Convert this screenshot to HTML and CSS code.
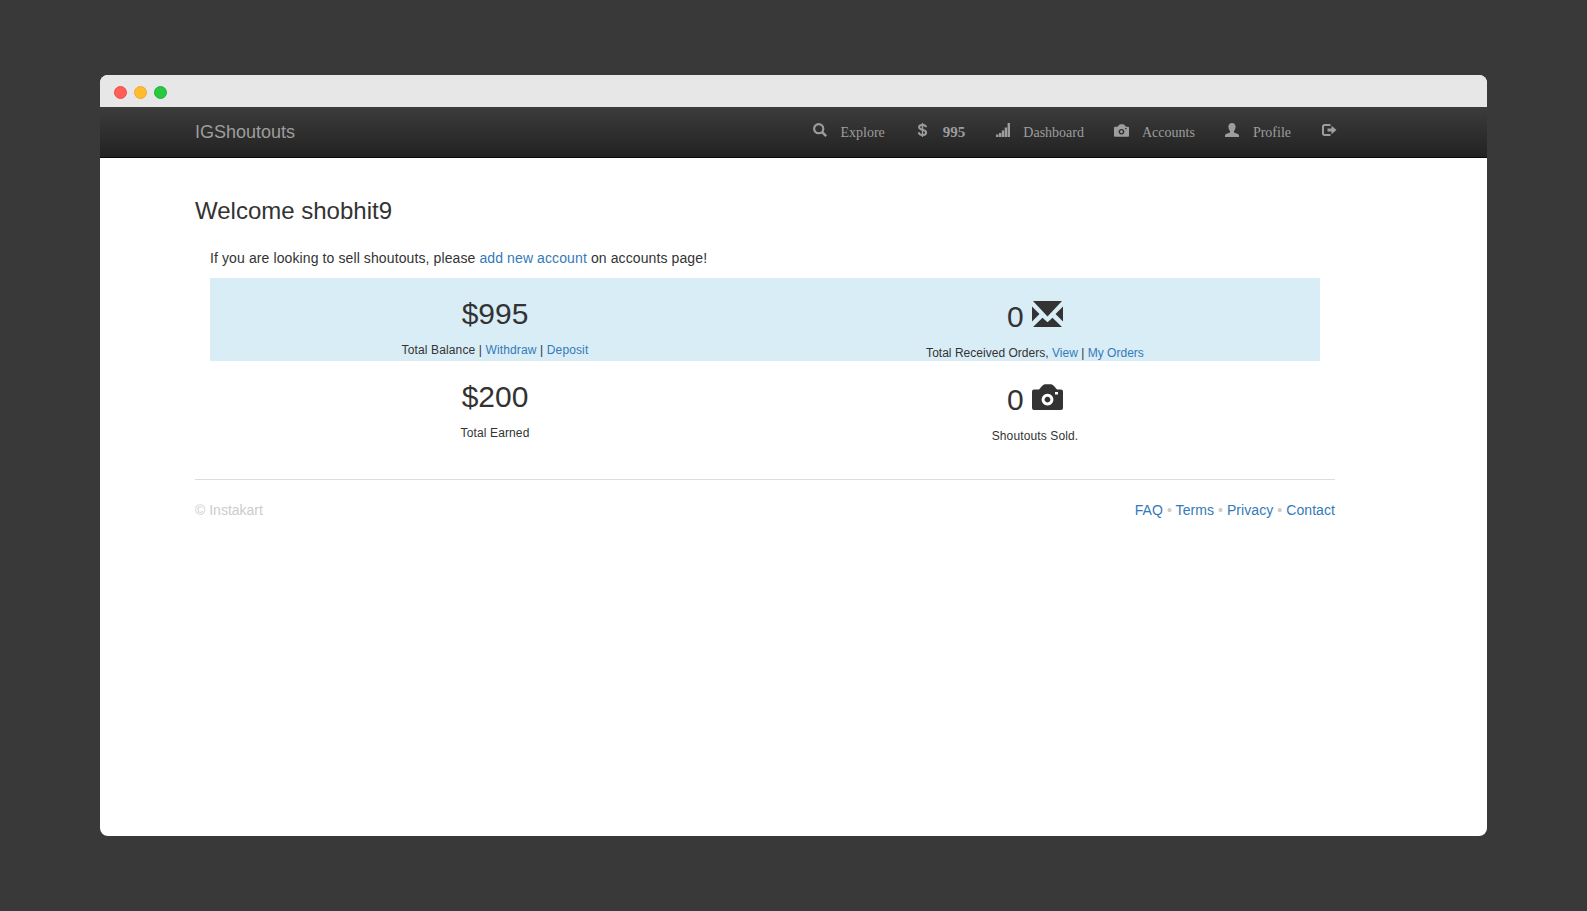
FILE: index.html
```html
<!DOCTYPE html>
<html lang="en">
<head>
<meta charset="utf-8">
<title>IGShoutouts</title>
<link rel="stylesheet" href="styles.css">
</head>
<body>
<div class="window">
  <div class="titlebar"><span class="dot red"></span><span class="dot yellow"></span><span class="dot green"></span></div>
  <header class="navbar">
    <div class="brand">IGShoutouts</div>
    <nav class="nav">
      <a class="item"><svg class="icon" viewBox="0 0 14 14"><circle cx="5.7" cy="5.7" r="4.6" fill="none" stroke="currentColor" stroke-width="2.100"/><path d="M8.200 10l1.800-1.800 4 4-1.700 1.700z"/></svg>Explore</a>
      <a class="item balance"><svg class="icon" viewBox="0 0 14 14"><path d="M7.500 0v14" stroke="currentColor" stroke-width="1.400"/><path d="M11 4.200C10.900 2.700 9.500 1.900 7.500 1.900C5.300 1.900 4.100 2.900 4.100 4.200C4.100 7.500 11.100 6.100 11.100 9.600C11.100 11.100 9.800 12.100 7.600 12.100C5.200 12.100 3.900 11 3.800 9.300" fill="none" stroke="currentColor" stroke-width="2"/></svg><b>995</b></a>
      <a class="item"><svg class="icon bars" viewBox="0 0 14 14"><path d="M0 11.500h2.400V14H0zM2.900 10h2.400v4H2.900zM5.800 7.500h2.400V14H5.800zM8.700 4.500h2.400V14H8.700zM11.600 0H14v14h-2.400z"/></svg>Dashboard</a>
      <a class="item"><svg class="icon camera" viewBox="0 0 31 26"><path fill-rule="evenodd" d="M2 5.500h5L10 2Q11.500.3 13 .3h6Q20.500.3 22 2l3 3.500h4q2 0 2 2V24q0 2-2 2H2q-2 0-2-2V7.500q0-2 2-2zM15.500 9.700a5.900 5.900 0 1 0 .01 0zM15.500 12.700a2.900 2.900 0 1 1-.01 0zM23 8v2.600h3V8z"/></svg>Accounts</a>
      <a class="item"><svg class="icon" viewBox="0 0 14 14"><path d="M7 0c2.200 0 3.600 1.400 3.600 3.700 0 2-.8 3.200-1.600 4.200v1.500l4 1.700q1 .5 1 1.500V14H0v-1.400q0-1 1-1.500l4-1.700V7.900C4.200 6.900 3.400 5.700 3.400 3.700 3.400 1.400 4.800 0 7 0z"/></svg>Profile</a>
      <a class="item"><svg class="icon logout" viewBox="0 0 16 14"><path d="M9.500 2H3.700Q2 2 2 3.700v6.600Q2 12 3.700 12h5.800" fill="none" stroke="currentColor" stroke-width="2"/><path d="M6.500 5.500h4V2.800L15.500 7l-5 4.200V8.500h-4z"/></svg></a>
    </nav>
  </header>
  <main class="container">
    <h1>Welcome shobhit9</h1>
    <div class="content">
      <p class="intro">If you are looking to sell shoutouts, please <a>add new account</a> on accounts page!</p>
      <section class="stats highlighted">
        <div class="stat"><h2>$995</h2><small>Total Balance | <a>Withdraw</a> | <a>Deposit</a></small></div>
        <div class="stat with-icon"><h2>0 <svg class="big" viewBox="0 0 31 26"><path d="M1 0h29L15.500 15.500zM0 5.500L7.500 13 0 20.500zM31 5.500L23.500 13l7.500 7.500zM1 26l9.500-9.200 5 4.400 5-4.400L30 26z"/></svg></h2><small class="orders">Total Received Orders, <a>View</a> | <a>My Orders</a></small></div>
      </section>
      <section class="stats">
        <div class="stat"><h2>$200</h2><small>Total Earned</small></div>
        <div class="stat with-icon"><h2>0 <svg class="big" viewBox="0 0 31 26"><path fill-rule="evenodd" d="M2 5.500h5L10 2Q11.500.3 13 .3h6Q20.500.3 22 2l3 3.500h4q2 0 2 2V24q0 2-2 2H2q-2 0-2-2V7.500q0-2 2-2zM15.500 9.700a5.900 5.900 0 1 0 .01 0zM15.500 12.700a2.900 2.900 0 1 1-.01 0zM23 8v2.600h3V8z"/></svg></h2><small>Shoutouts Sold.</small></div>
      </section>
    </div>
    <footer class="footer"><span>© Instakart</span><span class="links"><a>FAQ</a> • <a>Terms</a> • <a>Privacy</a> • <a>Contact</a></span></footer>
  </main>
</div>
</body>
</html>
```
FILE: styles.css
```css
* { box-sizing: border-box; }
body { margin: 0; height: 911px; padding: 75px 100px; background: #393939; color: #333; font: 14px/20px "Liberation Sans", Arial, sans-serif; overflow: hidden; }
a { color: #337ab7; text-decoration: none; }
svg { fill: currentColor; }
.window { width: 1387px; height: 761px; background: #fff; border-radius: 8px; overflow: hidden; }
.titlebar { height: 32px; background: #e7e7e7; display: flex; align-items: center; gap: 7px; padding: 2px 0 0 13.5px; }
.dot { width: 13px; height: 13px; border-radius: 50%; border: 1px solid; }
.red { background: #ff5f57; border-color: #f04b46; }
.yellow { background: #ffbd2e; border-color: #eba838; }
.green { background: #28c940; border-color: #1db23a; }
.navbar { height: 51px; border-bottom: 1px solid #080808; background: linear-gradient(#3c3c3c, #222); padding: 0 150px 0 95px; display: flex; justify-content: space-between; color: #9d9d9d; }
.brand { font-size: 18px; line-height: 50px; }
.nav { display: flex; gap: 30px; font-family: "Liberation Serif", "Times New Roman", serif; }
.item { display: flex; color: #9d9d9d; line-height: 51px; }
.icon { width: 14px; height: 14px; margin: 16px 14px 0 0; }
.icon.camera { width: 15px; height: 13px; margin: 17px 13px 0 0; }
.icon.bars { margin: 16px 13px 0 1px; }
.icon.logout { width: 16px; margin-right: 0; }
.balance b { font-size: 15px; }
.container { width: 1140px; margin-left: 95px; padding-top: 40px; }
h1, h2 { font-weight: 500; margin: 0; }
h1 { font-size: 24px; line-height: 26px; }
.content { padding: 0 15px; }
.intro { margin: 24px 0 10px; letter-spacing: .107px; }
.stats { display: flex; height: 83px; padding: 0 15px; }
.highlighted { background: #d9edf7; }
.stat { width: 540px; text-align: center; padding-top: 19px; }
h2 { font-size: 30px; line-height: 33px; margin-bottom: 10px; }
.with-icon h2 { line-height: 39px; margin-bottom: 7px; }
.big { width: 31px; height: 26px; vertical-align: 0; }
small { display: block; font-size: 12px; line-height: 20px; letter-spacing: .13px; }
.orders { letter-spacing: .02px; }
.footer { margin-top: 35px; border-top: 1px solid #ddd; padding-top: 20px; display: flex; justify-content: space-between; color: #ccc; }
.links { letter-spacing: .07px; }
```
